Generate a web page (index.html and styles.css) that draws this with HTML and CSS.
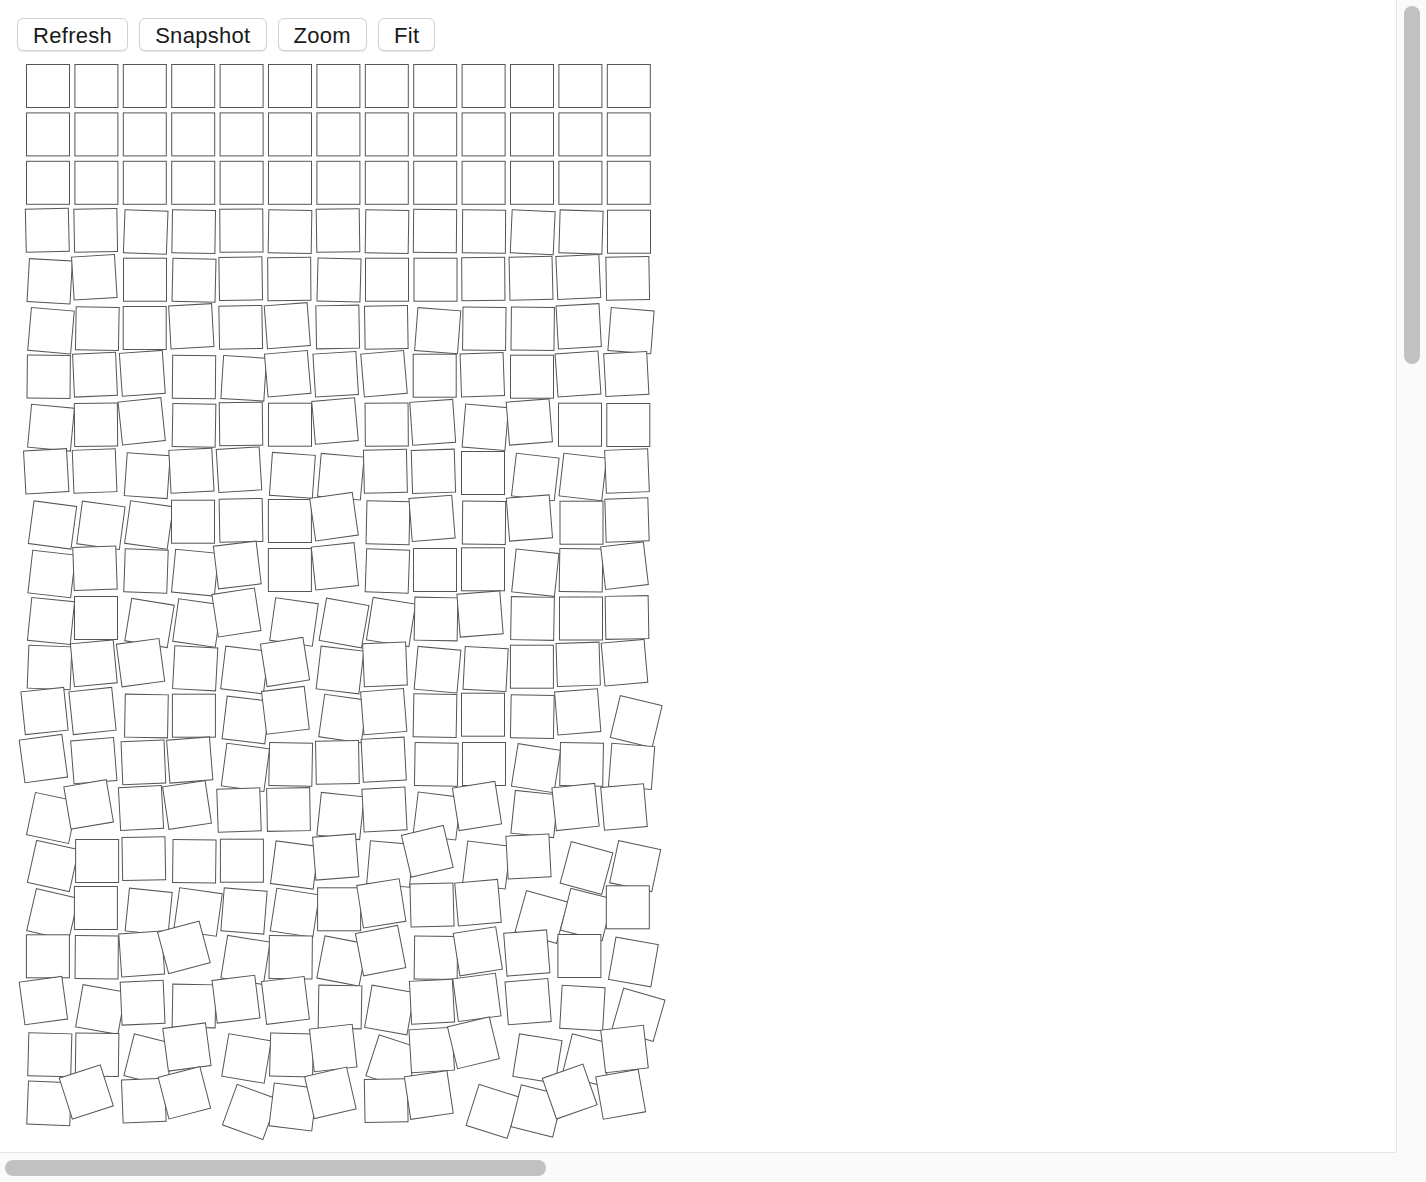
FILE: index.html
```html
<!DOCTYPE html>
<html lang="en">
<head>
<meta charset="utf-8">
<title>Schotter</title>
<link rel="stylesheet" href="styles.css">
</head>
<body>
<div class="page">
  <div class="toolbar">
    <button class="btn" type="button">Refresh</button>
    <button class="btn" type="button">Snapshot</button>
    <button class="btn" type="button">Zoom</button>
    <button class="btn" type="button">Fit</button>
  </div>
  <svg class="art" id="art" xmlns="http://www.w3.org/2000/svg" width="1396" height="1096" viewBox="0 56 1396 1096"></svg>
</div>
<div class="scrollbar scrollbar-v"><div class="thumb thumb-v"></div></div>
<div class="scrollbar scrollbar-h"><div class="thumb thumb-h"></div></div>
<div class="scroll-corner"></div>
<script src="script.js"></script>
</body>
</html>
```

FILE: styles.css
```css
html, body {
  margin: 0;
  padding: 0;
  background: #ffffff;
  overflow: hidden;
}

.page {
  width: 1396px;
  height: 1152px;
  overflow: hidden;
}

.toolbar {
  box-sizing: border-box;
  height: 56px;
  display: flex;
  align-items: flex-start;
  gap: 11px;
  padding: 18px 0 0 17px;
}

.btn {
  box-sizing: border-box;
  height: 33px;
  padding: 2px 15px 0;
  margin: 0;
  font-family: "Liberation Sans", Arial, sans-serif;
  font-size: 22px;
  letter-spacing: 0.3px;
  line-height: 1;
  color: #1a1a1a;
  background: #ffffff;
  border: 1px solid #d2d2d2;
  border-radius: 6px;
  box-shadow: 0 1px 1px rgba(0, 0, 0, 0.10);
}

.art {
  display: block;
}

.art rect {
  fill: #ffffff;
  stroke: #555555;
  stroke-width: 1;
}

/* scrollbar chrome drawn over the page edges */
.scrollbar {
  position: fixed;
  box-sizing: border-box;
  background: #fafafa;
  display: flex;
}

.scrollbar-v {
  top: 0;
  right: 0;
  width: 30px;
  height: 1152px;
  border-left: 1px solid #e6e6e6;
  padding: 6px 6px 0 7px;
}

.scrollbar-h {
  left: 0;
  bottom: 0;
  width: 1396px;
  height: 30px;
  border-top: 1px solid #e6e6e6;
  padding: 7px 0 0 5px;
}

.thumb {
  background: #c1c1c1;
  border-radius: 8px;
}

.thumb-v {
  width: 16px;
  height: 358px;
}

.thumb-h {
  width: 541px;
  height: 16px;
}

.scroll-corner {
  position: fixed;
  right: 0;
  bottom: 0;
  width: 30px;
  height: 30px;
  background: #fafafa;
}
```

FILE: script.js
```js
(function () {
  var NS = "http://www.w3.org/2000/svg";
  var svg = document.getElementById("art");
  var SIZE = 43;
  var rows = [];
  var r, c;
  for (r = 0; r < 3; r++) {
    var line = [];
    for (c = 0; c < 13; c++) {
      line.push([48 + 48.4 * c, 86 + 48.4 * r, 0]);
    }
    rows.push(line);
  }
  rows = rows.concat([
    [[47.3,230.3,-1.3],[95.7,230.3,-1],[145.7,232,2.2],[193.7,231.7,0.9],[241.4,230.7,-0.4],[290,231.7,0.9],[338,230.5,-0.9],[387,231.7,0.9],[435,231,0.5],[484,231.5,0.4],[532.7,232.3,2.6],[581,232,1.7],[629,231.7,0]],
    [[49.7,281.3,3.2],[94.3,277.3,-3.5],[145,279.7,0],[194,280.3,1.3],[240.7,278.7,-0.9],[289.3,279,-0.4],[339,280,1.5],[387,279.7,0],[435.5,279.7,0],[483.3,279,-0.4],[531,278.3,-1.3],[578.3,277,-2.6],[627.7,278.3,-1]],
    [[51,330.7,4.9],[97.3,328.7,1],[144.7,328,0],[191.3,326.3,-3.2],[240.7,327.3,-1],[287.3,325.7,-4.4],[337.7,327,-1],[386.3,327.3,-0.9],[437.7,330.7,4.4],[484.3,328.7,0.6],[532.7,328.7,0.6],[578.7,326.3,-3.2],[631,330.7,4.5]],
    [[48.7,376.7,0.5],[95,374.7,-2.5],[142.3,373.3,-4],[194,377,0.5],[243.7,378.3,3.6],[287.7,373.7,-4.9],[335.7,374.3,-3.5],[384,373.7,-4.9],[434.7,375.7,0],[482.3,374.7,-2],[532,376.7,0],[578,374,-4],[626.3,374,-3]],
    [[51,427.7,5.3],[96,424.7,-0.5],[141.7,421.3,-6],[194,425.3,1],[241,424,-0.7],[290,424.7,0],[335,421,-5],[386.7,424.7,-0.4],[432.7,422.3,-4],[485.3,427.3,4.8],[529.3,422,-4.5],[580,424.7,0],[628.3,425,0]],
    [[46.2,471.3,-3.2],[94.6,471,-2.3],[147.2,475.7,4],[191.4,470.7,-3],[239,469.7,-3.5],[292.4,475.3,4],[340.8,476.7,5],[385.4,471.3,-1.3],[433.4,471.3,-1.8],[483,473,0],[535.3,477,6.5],[582.8,477,6.5],[627,471,-2.3]],
    [[52.5,525,7.6],[100.9,525.3,7.6],[148.9,525,8],[193,521.7,0],[241,520.3,-1],[289.9,521,0],[334,516.7,-8.1],[388,522.7,1.3],[432,518.3,-4.5],[484,522.7,0.5],[529.4,518,-4.5],[581.5,522.7,0],[627,520,-1.8]],
    [[51.7,574,6.5],[95,568.3,-2],[146,571,2],[195,572.7,5.5],[237.3,565,-6.8],[289.9,570,0],[334.9,566.3,-6],[387.4,571,2],[435,570,0],[483,569.3,0],[535.3,572.7,6],[581,570.3,0.8],[624.5,565.7,-6.7]],
    [[51,621,5.8],[96,618,0],[149.5,623,9.3],[197,623,8],[236.4,612.5,-8.7],[294,622,8],[344,623,10],[391,622,9],[436,619,1],[480,614,-4.5],[532.5,618.5,1],[581,618.5,0],[627,617.5,-1]],
    [[49.5,667.5,2.3],[93.8,663.3,-5.4],[140.5,662.7,-7.6],[195.2,668.3,3],[244.6,670,6.8],[285,662,-9],[340,670,6.7],[385,664.3,-2.3],[437.5,669.7,5.2],[485.6,669,3],[531.9,666.7,0],[578.2,664.3,-1.8],[624.5,662.7,-5]],
    [[44.5,711,-5.9],[92.5,711,-5.9],[146.4,716,1],[193.9,715.7,0],[246,720,6.8],[285.4,710.3,-6.8],[343,718.5,8],[383.7,711.6,-4.5],[435,715.7,1],[483,714.7,0],[532.3,716.7,1],[577.7,711.8,-4.5],[636.2,721.6,13.5]],
    [[43.4,758.6,-7.7],[93.8,760.7,-4.5],[143.4,762.3,-2.3],[189.7,760,-4.5],[245.4,767.4,7.5],[290.7,764.3,1],[337.4,762.3,-1],[383.7,759.7,-3],[436.3,764.3,1],[484,764,0],[536,768.2,9],[581.6,764.3,1],[631.6,766.4,4.5]],
    [[52,818,12],[88.6,804.4,-9.6],[141,808,-3],[187,805,-8.5],[239,810,-2],[288.5,809.5,-1],[340.5,816,6],[384.5,809.5,-3],[437,816,7],[477,806,-9],[534.5,814,6],[575.5,807,-6],[624,807,-5]],
    [[53,866,12.5],[97.1,861,0],[143.8,858.7,-1],[194.3,861.3,0.7],[241.9,860.7,0],[294.6,865,7.5],[335.7,857,-4.5],[390,864,5],[427.3,851.3,-13.2],[486.5,865,7],[528.5,856.5,-3],[586.5,868,15],[635.2,866.2,12]],
    [[52.5,914.5,13],[95.9,908,0],[148.7,911.7,5.8],[198,912,8],[244,911,4.5],[294.8,912.8,8.7],[339.1,909.3,0],[381.3,903.4,-9],[432,905,-1.5],[478,902.7,-5],[541.5,917,15.5],[586.5,914.5,14],[627.8,907.3,0]],
    [[47.9,956.3,0],[96.7,957.3,0.5],[141.7,954,-4],[183.9,947.4,-15],[245.5,960,9],[290.7,957.3,0.5],[342,961,11],[380.6,950.6,-11],[435.9,957.7,0.7],[477.8,951.3,-9],[526.8,953,-4.5],[579.4,956,0],[633.4,962,10]],
    [[43.4,1000.6,-7.7],[100.5,1009.5,10],[142.6,1002.7,-2.5],[194,1006,1],[236,999.2,-7],[285.4,1000.4,-7],[340,1007,1],[389.5,1010,10],[432,1001.7,-3],[476.9,997.4,-7.5],[528.1,1001.7,-4.5],[582.4,1008,3.3],[638.4,1014.8,16]],
    [[49.8,1054.8,1.5],[97.1,1054.7,0.8],[150,1060,14],[186.9,1047,-7.5],[246.5,1058.5,9.5],[291.6,1055,1.5],[333.2,1048,-6.5],[393,1062,18],[431.7,1050,-3.5],[473.4,1042.8,-13.6],[537.4,1058.5,9],[588,1060,14],[624.5,1049,-6.5]],
    [[49.1,1103.3,2.3],[86.3,1092,-17.7],[143.8,1100.7,-2.3],[184.4,1092.8,-14.5],[250,1112,20],[293,1107,7],[330.4,1092.8,-13],[386.2,1100.7,-1],[428.8,1095,-8.5],[493.1,1111.4,17.6],[537,1111,14],[569.7,1091.6,-19.3],[620.7,1094.3,-10]]
  ]);
  var half = SIZE / 2;
  for (r = 0; r < rows.length; r++) {
    for (c = 0; c < rows[r].length; c++) {
      var d = rows[r][c];
      var rect = document.createElementNS(NS, "rect");
      rect.setAttribute("x", -half);
      rect.setAttribute("y", -half);
      rect.setAttribute("width", SIZE);
      rect.setAttribute("height", SIZE);
      rect.setAttribute("transform", "translate(" + d[0] + " " + d[1] + ") rotate(" + d[2] + ")");
      svg.appendChild(rect);
    }
  }
})();
```
